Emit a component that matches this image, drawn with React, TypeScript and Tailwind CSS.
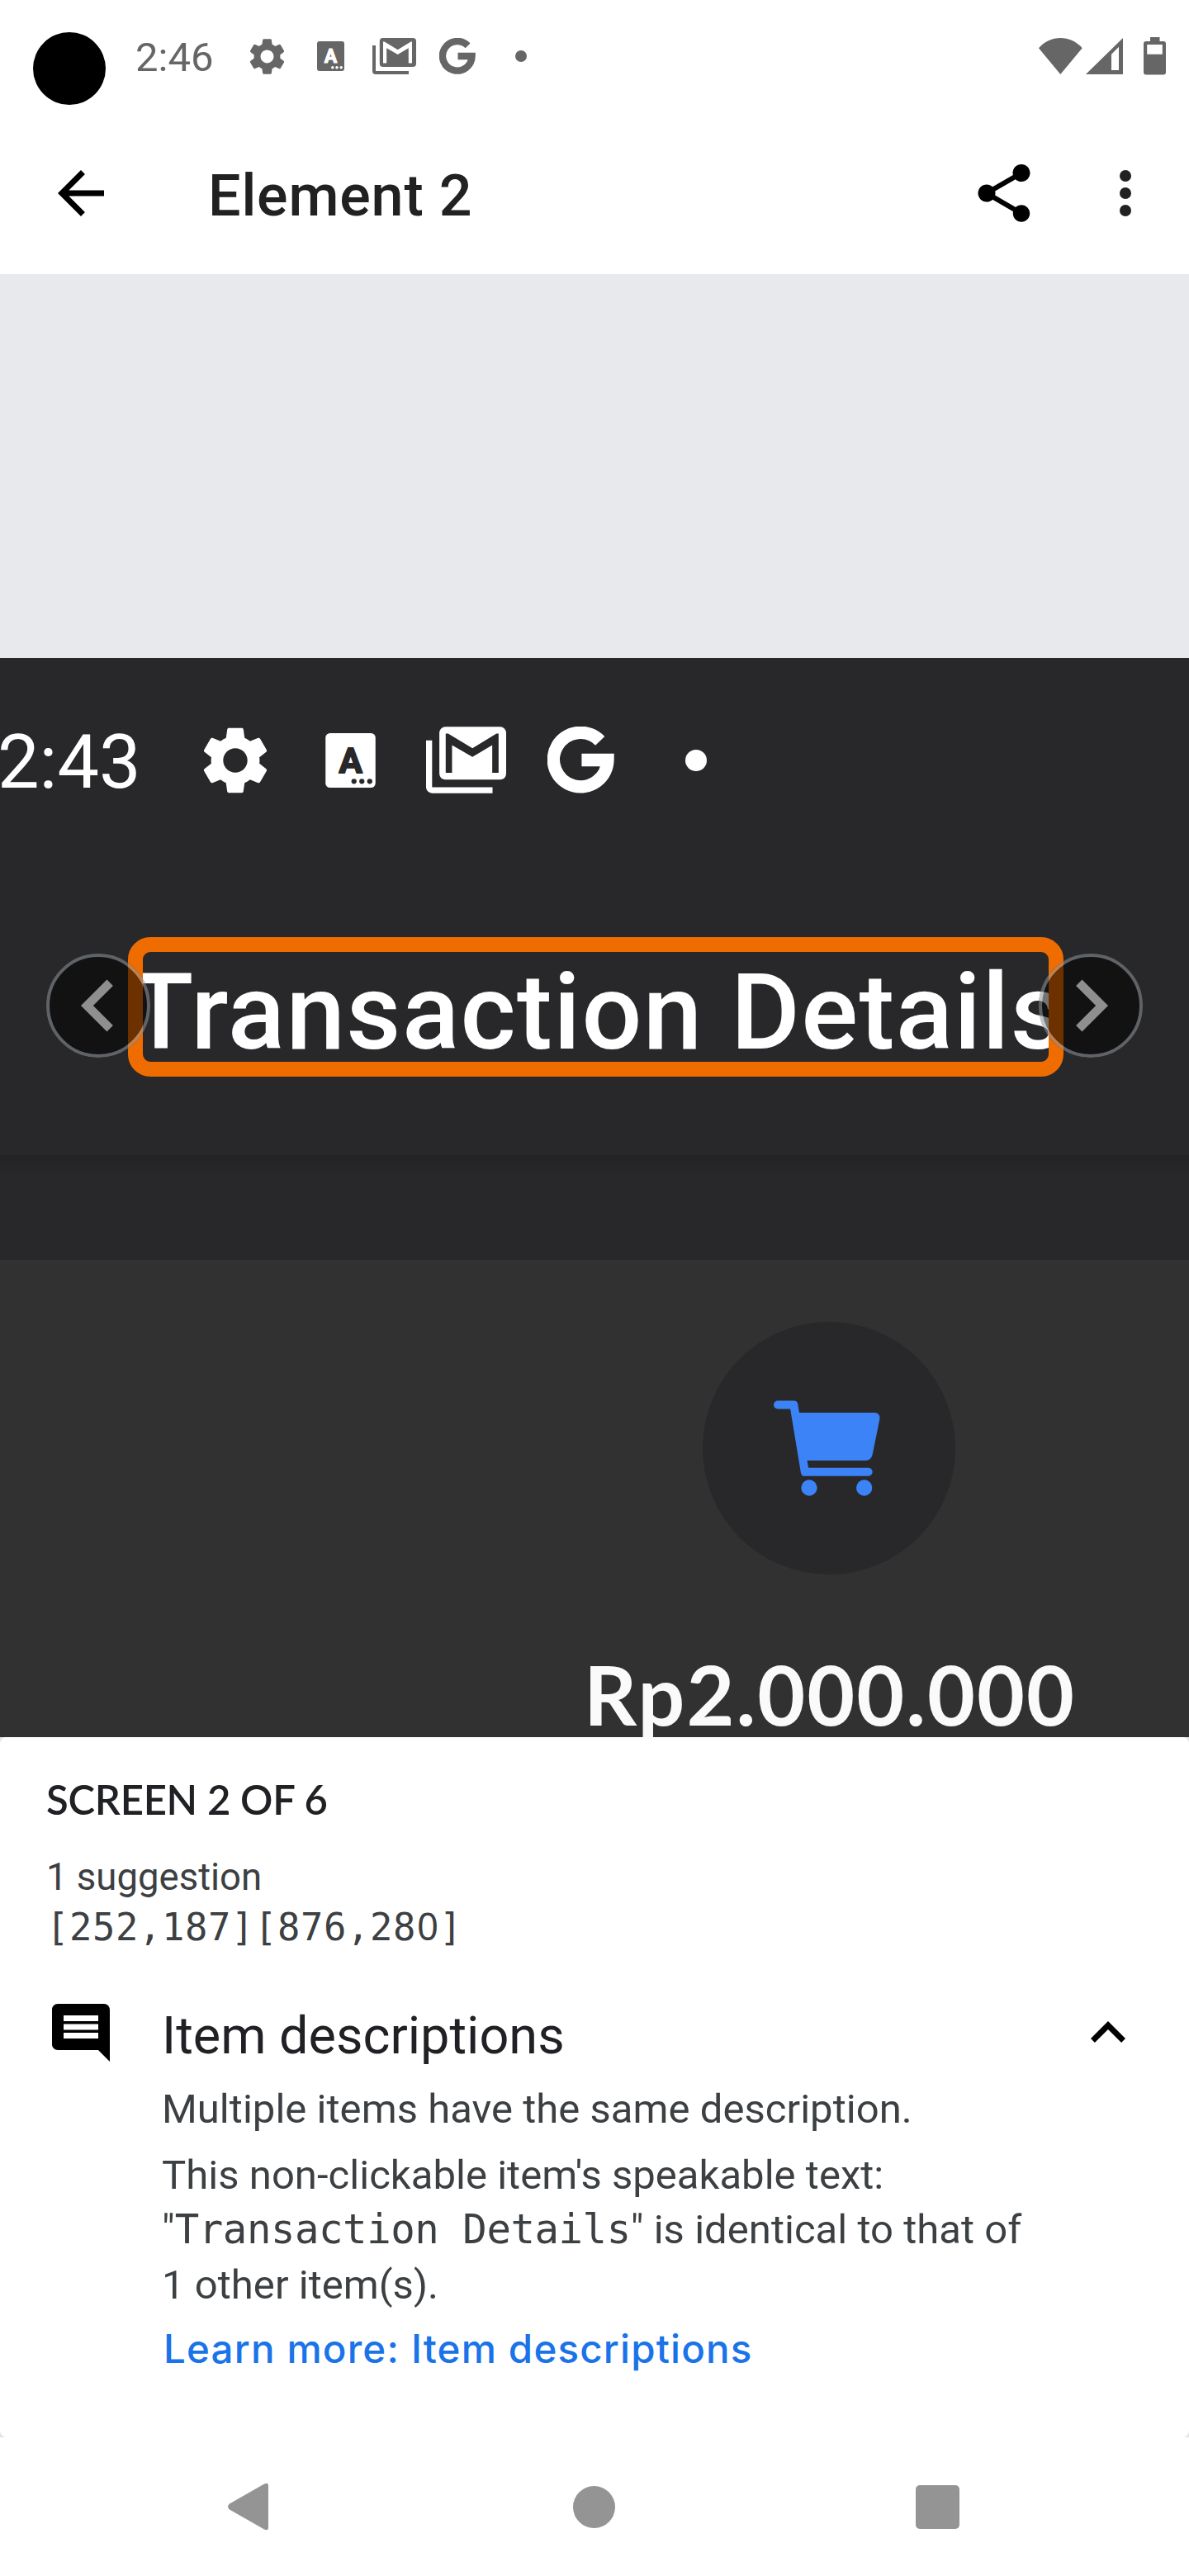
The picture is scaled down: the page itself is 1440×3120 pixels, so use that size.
const GEAR =
  'M19.14 12.94c.04-.3.06-.61.06-.94 0-.32-.02-.64-.07-.94l2.03-1.58c.18-.14.23-.41.12-.61l-1.92-3.32c-.12-.22-.37-.29-.59-.22l-2.39.96c-.5-.38-1.03-.7-1.62-.94l-.36-2.54c-.04-.24-.24-.41-.48-.41h-3.84c-.24 0-.43.17-.47.41l-.36 2.54c-.59.24-1.13.57-1.62.94l-2.39-.96c-.22-.08-.47 0-.59.22L2.74 8.87c-.12.21-.08.47.12.61l2.03 1.58c-.05.3-.09.63-.09.94s.02.64.07.94l-2.03 1.58c-.18.14-.23.41-.12.61l1.92 3.32c.12.22.37.29.59.22l2.39-.96c.5.38 1.03.7 1.62.94l.36 2.54c.05.24.24.41.48.41h3.84c.24 0 .44-.17.47-.41l.36-2.54c.59-.24 1.13-.56 1.62-.94l2.39.96c.22.08.47 0 .59-.22l1.92-3.32c.12-.22.07-.47-.12-.61l-2.01-1.58zM12 15.6c-1.98 0-3.6-1.62-3.6-3.6s1.62-3.6 3.6-3.6 3.6 1.62 3.6 3.6-1.62 3.6-3.6 3.6z';

type IconProps = { className: string };

const Gear = ({ className }: IconProps) => (
  <svg viewBox="0 0 24 24" className={className} fill="currentColor">
    <path d={GEAR} />
  </svg>
);

const Keyboard = ({ className, cut }: IconProps & { cut: string }) => (
  <svg viewBox="0 0 33 36" className={className} fill="currentColor">
    <rect width="33" height="36" rx="3" />
    <g fill={cut} stroke={cut}>
      <text x="16.6" y="26" textAnchor="middle" fontSize="23" fontWeight="700" fontFamily="Roboto, sans-serif" strokeWidth="1" strokeLinejoin="round">
        A
      </text>
      <g stroke="none">
        <circle cx="18.8" cy="31.8" r="1.7" />
        <circle cx="24" cy="31.8" r="1.7" />
        <circle cx="29.2" cy="31.8" r="1.7" />
      </g>
    </g>
  </svg>
);

const MailStack = ({ className, cut }: IconProps & { cut: string }) => (
  <svg viewBox="0 0 53 44" className={className} fill="currentColor">
    <path d="M0 9h4v31h40v4H4a4 4 0 0 1-4-4z" />
    <rect x="8.8" width="44.2" height="35" rx="4" />
    <path d="M13 30.5V4.5h1.6L30.7 14.2 46.6 4.5H48v26h-4.2V12.2L30.7 20 17.2 12.2v18.3z" fill={cut} />
  </svg>
);

const Google = ({ className }: IconProps) => (
  <svg viewBox="0 0 44 44" className={className} fill="none" stroke="currentColor" strokeWidth="8.4">
    <path d="M34.6 9.4A17.8 17.8 0 1 0 39.6 22H22.5" />
  </svg>
);

const Wifi = () => (
  <svg viewBox="0 0 53 44" className="h-[44px] w-[53px]" fill="currentColor">
    <path d="M26.3 44L0 12.3C14-4 38.6-4 52.7 12.3z" />
  </svg>
);

const Signal = () => (
  <svg viewBox="0 0 45 44" className="ml-[4px] h-[44px] w-[45px]" fill="currentColor" fillRule="evenodd">
    <path d="M45 0v44H0zM40 10.7l-9 9V39h9z" />
  </svg>
);

const Battery = () => (
  <svg viewBox="0 0 27 46" className="ml-[25px] h-[46px] w-[27px]" fill="currentColor" fillRule="evenodd">
    <path d="M8 0h11.5v5H24a3 3 0 0 1 3 3v34.5a3 3 0 0 1-3 3H3a3 3 0 0 1-3-3V8a3 3 0 0 1 3-3h5zM4.2 9v11.7h18.6V9z" />
  </svg>
);

const Cart = () => (
  <svg viewBox="0 0 480 450" className="mt-[79px] ml-[69px] h-[150px] w-[160px]" fill="#3c83f7">
    <path d="M66 64.500H124L164.500 308.500H395" fill="none" stroke="#3c83f7" strokeWidth="30" strokeLinecap="round" strokeLinejoin="round" />
    <path d="M130 93H418Q439 95 436 117L410 245Q405 266 385 267H158z" />
    <circle cx="180" cy="366" r="29" />
    <circle cx="380" cy="366" r="29" />
  </svg>
);

const RoundButton = ({ className, d }: IconProps & { d: string }) => (
  <button className={`absolute top-[358px] size-[126px] rounded-full bg-black opacity-[.54] ${className}`}>
    <svg viewBox="0 0 24 24" className="size-[126px]" fill="#e7e7e7">
      <circle cx="12" cy="12" r="11.62" fill="none" stroke="#8e959d" strokeWidth=".76" />
      <path d={d} />
    </svg>
  </button>
);

function StatusBar() {
  return (
    <div className="flex h-[136px] items-center pr-[28px] pl-[40px] text-[#666666]">
      <div className="mt-[30px] size-[88px] shrink-0 rounded-full bg-black" />
      <div className="mt-[4px] ml-[36px] w-[133px] text-[49px] leading-[60px]">2:46</div>
      <Gear className="size-[53px]" />
      <Keyboard className="ml-[34px] h-[36px] w-[33px]" cut="#ffffff" />
      <MailStack className="ml-[34px] h-[44px] w-[53px]" cut="#ffffff" />
      <Google className="ml-[28px] size-[44px]" />
      <div className="ml-[48px] size-[14px] rounded-full bg-[#666666]" />
      <div className="ml-auto flex items-center">
        <Wifi />
        <Signal />
        <Battery />
      </div>
    </div>
  );
}

function AppBar() {
  return (
    <header className="flex h-[196px] items-center pl-[56px]">
      <svg viewBox="0 0 24 24" className="size-[84px]">
        <path d="M20 11H7.830l5.590-5.590L12 4l-8 8 8 8 1.410-1.410L7.830 13H20v-2z" />
      </svg>
      <h1 className="mt-[6px] ml-[112px] text-[70px] leading-[84px] font-medium tracking-[0.85px] text-[#212121]">Element 2</h1>
      <svg viewBox="0 0 24 24" className="ml-auto size-[84px]">
        <path d="M18 16.080c-.76 0-1.440.3-1.960.77L8.910 12.700c.05-.23.09-.46.09-.7s-.04-.47-.09-.7l7.050-4.110c.54.5 1.250.81 2.040.81 1.660 0 3-1.340 3-3s-1.340-3-3-3-3 1.340-3 3c0 .24.04.47.09.7L8.040 9.810C7.500 9.310 6.790 9 6 9c-1.660 0-3 1.340-3 3s1.340 3 3 3c.79 0 1.500-.31 2.040-.81l7.120 4.160c-.05.21-.08.43-.08.65 0 1.610 1.310 2.920 2.920 2.920 1.610 0 2.920-1.310 2.920-2.920s-1.310-2.920-2.920-2.920z" />
      </svg>
      <div className="mr-[70px] ml-[98px] flex flex-col gap-[7px]">
        <i className="size-[14px] rounded-full bg-[#212121]" />
        <i className="size-[14px] rounded-full bg-[#212121]" />
        <i className="size-[14px] rounded-full bg-[#212121]" />
      </div>
    </header>
  );
}

function Preview() {
  return (
    <section className="h-[1772px] bg-[#e8e9ed] pt-[465px]">
      <div className="relative h-[1307px] overflow-hidden bg-[#313131]">
        <div className="h-[729px] bg-[#28282a]">
          <div className="flex h-[247px] items-center text-white">
            <div className="mt-[7px] ml-[-3px] w-[239px] text-[90px] leading-[100px]">2:43</div>
            <Gear className="size-[98px]" />
            <Keyboard className="ml-[60px] h-[66px] w-[61px]" cut="#28282a" />
            <MailStack className="ml-[61px] h-[81px] w-[97px]" cut="#28282a" />
            <Google className="ml-[50px] size-[81px]" />
            <div className="ml-[86px] size-[26px] rounded-full bg-white" />
          </div>
          <div className="mt-[91px] ml-[155px] h-[169px] w-[1133px] overflow-hidden rounded-[27px] border-[18px] border-[#ef6c00]">
            <div className="mt-[3px] ml-[-17px] text-[128.5px] leading-[140px] font-medium tracking-[1.4px] whitespace-nowrap text-white">
              Transaction Details
            </div>
          </div>
          <div className="mt-[95px] h-[26px] bg-linear-to-b from-[#232325] to-[#28282a]" />
        </div>
        <div className="mt-[75px] ml-[851px] flex size-[306px] rounded-full bg-[#28282a]">
          <Cart />
        </div>
        <div className="mt-[94px] ml-[707px] font-['Lato',sans-serif] text-[100px] leading-[100px] font-bold tracking-[2px] text-[#fafafa]">
          Rp2.000.000
        </div>
        <RoundButton className="left-[56px]" d="M15.410 7.410L14 6l-6 6 6 6 1.410-1.410L10.830 12z" />
        <RoundButton className="left-[1258px]" d="M8.590 16.590L10 18l6-6-6-6-1.410 1.410L13.170 12z" />
      </div>
    </section>
  );
}

function Sheet() {
  return (
    <div className="bg-[#e2e2e2]">
      <section className="h-[848px] rounded-[8px] bg-white px-[56px] pt-[47px] text-[#3c4043]">
        <h2 className="font-['Lato',sans-serif] text-[49px] leading-[56px] font-semibold tracking-[-0.25px] text-[#202124]">SCREEN 2 OF 6</h2>
        <div className="mt-[37px] text-[45.5px] leading-[60px]">1 suggestion</div>
        <div className="mt-[1px] h-[60px] font-['DejaVu_Sans_Mono',monospace] text-[45.5px] leading-[60px] tracking-[0.6px]">
          [252,187][876,28<span className="px-[1px] font-['Noto_Sans',sans-serif] leading-none tracking-normal">0</span>]
        </div>
        <div className="mt-[55px] flex items-start">
          <svg viewBox="0 0 24 24" className="size-[84px] shrink-0">
            <path d="M21.990 4c0-1.100-.89-2-1.990-2H4c-1.100 0-2 .9-2 2v12c0 1.100.9 2 2 2h14l4 4-.01-18zM18 14H6v-2h12v2zm0-3H6V9h12v2zm0-3H6V6h12v2z" />
          </svg>
          <div className="ml-[56px] w-[1000px]">
            <h3 className="mt-[4px] text-[63px] leading-[84px] text-[#202124]">Item descriptions</h3>
            <p className="mt-[13.5px] text-[49px] leading-[66.5px] tracking-[0.04px]">Multiple items have the same description.</p>
            <p className="mt-[13.5px] w-[1060px] text-[49px] leading-[66.5px] tracking-[0.04px] whitespace-nowrap">
              This non-clickable item's speakable text:
              <br />
              "<span className="font-['DejaVu_Sans_Mono',monospace] leading-none tracking-[-0.45px]">Transaction Details</span>" is identical to that of
              <br />1 other item(s).
            </p>
            <a className="mt-[11px] ml-[2px] block font-['Inter',sans-serif] text-[47.5px] leading-[66px] font-medium tracking-[1.18px] text-[#1a73e8]">
              Learn more: Item descriptions
            </a>
          </div>
          <svg viewBox="0 0 24 24" className="ml-[104px] size-[84px] shrink-0">
            <path d="M12 8l-6 6 1.410 1.410L12 10.830l4.590 4.580L18 14z" />
          </svg>
        </div>
      </section>
    </div>
  );
}

function NavBar() {
  return (
    <nav className="flex h-[168px] items-center text-[#949494]">
      <svg viewBox="0 0 49 58" className="ml-[276px] h-[58px] w-[49px]" fill="currentColor">
        <path d="M2 25.500L44 1.500Q49-1 49 4V54Q49 59 44 56.500L2 32.500Q-2 29 2 25.500z" />
      </svg>
      <div className="ml-[369px] size-[51px] rounded-full bg-[#949494]" />
      <div className="ml-[364px] size-[53px] rounded-[5px] bg-[#949494]" />
    </nav>
  );
}

export default function App() {
  return (
    <div className="h-[3120px] w-[1440px] overflow-hidden bg-white font-['Roboto',sans-serif]">
      <StatusBar />
      <AppBar />
      <Preview />
      <Sheet />
      <NavBar />
    </div>
  );
}
